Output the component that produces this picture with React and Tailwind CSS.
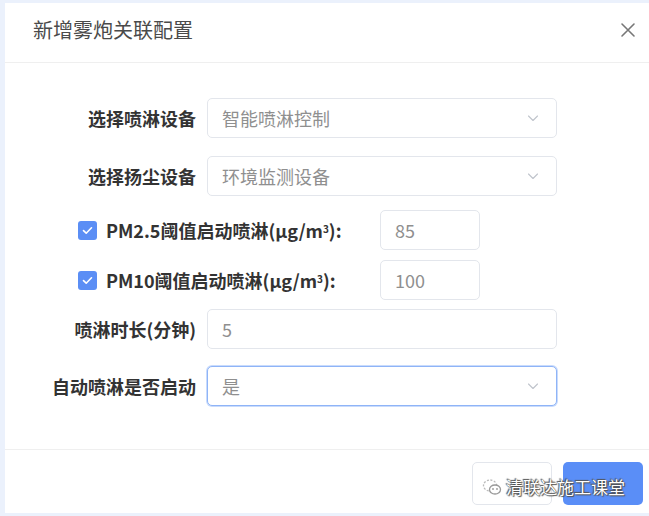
import React from "react";

const font = { fontFamily: '"Noto Sans CJK SC", "Noto Sans", sans-serif' };

function Chevron() {
  return (
    <svg width="14" height="14" viewBox="0 0 14 14" fill="none" className="text-[#c0c4cc]">
      <path d="M2.5 5l4.5 4.5L11.5 5" stroke="currentColor" strokeWidth="1.1" strokeLinecap="round" strokeLinejoin="round" />
    </svg>
  );
}

function Select({ value, focus }) {
  return (
    <div
      className={`flex h-[40px] w-[350px] items-center justify-between rounded-[5px] border bg-white pl-[14px] pr-[16px] ${
        focus ? "border-[#8fb4f7] shadow-[0_0_0_1px_#c9dbfc]" : "border-[#e3e6ec]"
      }`}
    >
      <span className="text-[18px] text-[#8f8f8f]">{value}</span>
      <Chevron />
    </div>
  );
}

function Input({ value, w }) {
  return (
    <div className={`flex h-[40px] items-center rounded-[5px] border border-[#e3e6ec] bg-white pl-[14px] ${w}`}>
      <span className="text-[18px] text-[#8f8f8f]">{value}</span>
    </div>
  );
}

function Row({ label, children, mt }) {
  return (
    <div className={`flex items-center ${mt}`}>
      <div className="w-[202px] shrink-0 pr-[11px] text-right text-[18px] font-bold text-[#333]">{label}</div>
      {children}
    </div>
  );
}

function Check() {
  return (
    <div className="flex h-[19px] w-[19px] shrink-0 items-center justify-center rounded-[3px] bg-[#5b8ef5]">
      <svg width="11" height="9" viewBox="0 0 11 9" fill="none">
        <path d="M1.5 4.6L4.2 7.2 9.5 1.8" stroke="white" strokeWidth="1.6" strokeLinecap="round" strokeLinejoin="round" />
      </svg>
    </div>
  );
}

function CheckRow({ label, value, mt }) {
  return (
    <div className={`flex items-center ${mt}`}>
      <div className="w-[73px] shrink-0" />
      <Check />
      <div className="ml-[9px] w-[274px] shrink-0 text-[18px] font-bold text-[#333]">{label}</div>
      <Input value={value} w="w-[100px]" />
    </div>
  );
}

export default function App() {
  return (
    <div className="h-[516px] w-[649px] overflow-hidden bg-[#ebf1fc] pb-[3px] pl-[5px] pt-[3px]" style={font}>
      <div className="flex h-[510px] w-[660px] flex-col bg-white">
        <div className="flex h-[60px] shrink-0 items-center justify-between border-b border-[#efefef] pb-[5px] pl-[28px] pr-[29px]">
          <span className="text-[20px] text-[#4a4a4a]">新增雾炮关联配置</span>
          <svg width="16" height="16" viewBox="0 0 16 16" fill="none">
            <path d="M2 2l12 12M14 2L2 14" stroke="#777" strokeWidth="1.6" strokeLinecap="round" />
          </svg>
        </div>
        <div className="flex-1 pt-[35px]">
          <Row label="选择喷淋设备">
            <Select value="智能喷淋控制" />
          </Row>
          <Row label="选择扬尘设备" mt="mt-[18px]">
            <Select value="环境监测设备" />
          </Row>
          <CheckRow label={<>PM2.5阈值启动喷淋(μg/m<sup className="text-[10px]">3</sup>):</>} value="85" mt="mt-[14px]" />
          <CheckRow label={<>PM10阈值启动喷淋(μg/m<sup className="text-[10px]">3</sup>):</>} value="100" mt="mt-[10px]" />
          <Row label="喷淋时长(分钟)" mt="mt-[9px]">
            <Input value="5" w="w-[350px]" />
          </Row>
          <Row label="自动喷淋是否启动" mt="mt-[17px]">
            <Select value="是" focus />
          </Row>
        </div>
        <div className="relative flex h-[64px] shrink-0 items-start gap-[11px] border-t border-[#efefef] pl-[467px] pt-[12px]">
          <div className="h-[43px] w-[80px] rounded-[5px] border border-[#e3e6ec] bg-white" />
          <div className="h-[43px] w-[80px] rounded-[5px] bg-[#5a8ef7]" />
          <div className="absolute left-[477px] top-[24px] flex items-center gap-[4px]">
            <svg width="20" height="18" viewBox="0 0 20 18" fill="none">
              <ellipse cx="8" cy="7.5" rx="6.5" ry="5.5" stroke="#bbb" strokeWidth="1.3" strokeDasharray="2 1.5" />
              <ellipse cx="13" cy="11.5" rx="5.5" ry="4.5" fill="white" stroke="#999" strokeWidth="1.3" />
              <circle cx="11" cy="11" r="0.9" fill="#999" />
              <circle cx="15" cy="11" r="0.9" fill="#999" />
            </svg>
            <span
              className="text-[17px] text-white"
              style={{ textShadow: "0 0 1px #333, 1px 1px 1px #555, -1px -1px 1px #555" }}
            >
              清联达施工课堂
            </span>
          </div>
        </div>
      </div>
    </div>
  );
}
